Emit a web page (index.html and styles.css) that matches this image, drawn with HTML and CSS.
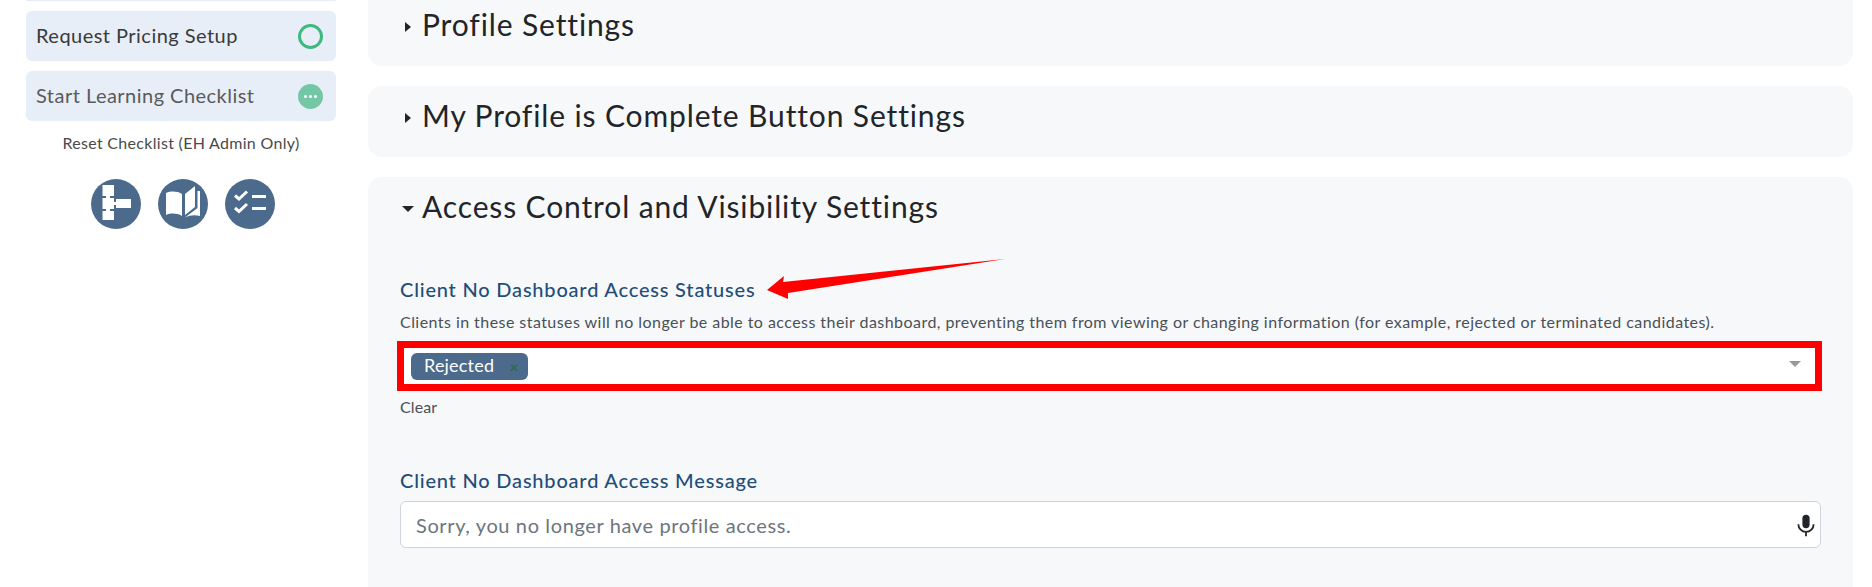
FILE: index.html
```html
<!DOCTYPE html>
<html lang="en">
<head>
<meta charset="utf-8">
<title>Access Control and Visibility Settings</title>
<link rel="stylesheet" href="styles.css">
</head>
<body>
<div class="page">
  <aside class="sidebar">
    <div class="task task-sliver"></div>
    <div class="task">
      <span class="task-name">Request Pricing Setup</span>
      <span class="ring"></span>
    </div>
    <div class="task task-muted">
      <span class="task-name">Start Learning Checklist</span>
      <span class="dots"><i></i><i></i><i></i></span>
    </div>
    <div class="reset">Reset Checklist (EH Admin Only)</div>
    <div class="tools">
      <svg class="tool" viewBox="0 0 50 50"><circle cx="25" cy="25" r="25" fill="#4b6a8c"/><path fill="#fff" d="M11.500 6H23v11h-4v2h4v4h2v-3h15v9H25v-3h-2v4H19v2h4v9H11.500v-9H15v-2h-3.500V19H15v-2h-3.500z"/></svg>
      <svg class="tool" viewBox="0 0 50 50"><circle cx="25" cy="25" r="25" fill="#4b6a8c"/><path fill="#fff" d="M8 14c5-2 11-2 16 1v22c-5-3-11-3-16-1zM27 15l10-8v21l-10 8zM39.500 12H42v25c-5-1.500-10-1-15 1.500L39.500 29z"/></svg>
      <svg class="tool" viewBox="0 0 50 50"><circle cx="25" cy="25" r="25" fill="#4b6a8c"/><path fill="none" stroke="#fff" stroke-width="3" d="M10 16.500l4 3.500 8-7.500M10 29l4 3.500 8-7.500M27 17.500h14M27 29.500h14"/></svg>
    </div>
  </aside>
  <main class="main">
    <section class="panel panel-clipped">
      <h2 class="panel-title"><span class="caret-right"></span>Profile Settings</h2>
    </section>
    <section class="panel">
      <h2 class="panel-title"><span class="caret-right"></span>My Profile is Complete Button Settings</h2>
    </section>
    <section class="panel panel-open">
      <h2 class="panel-title"><span class="caret-down"></span>Access Control and Visibility Settings</h2>
      <div class="label label-first">Client No Dashboard Access Statuses</div>
      <p class="desc">Clients in these statuses will no longer be able to access their dashboard, preventing them from viewing or changing information (for example, rejected or terminated candidates).</p>
      <div class="select">
        <span class="chip"><span class="chip-text">Rejected</span><span class="chip-x">×</span></span>
        <span class="select-arrow"></span>
        <span class="red-box"></span>
      </div>
      <div class="clear">Clear</div>
      <div class="label label-second">Client No Dashboard Access Message</div>
      <div class="input">
        <span class="placeholder">Sorry, you no longer have profile access.</span>
        <svg class="mic" viewBox="0 0 20 24"><rect x="6" y="0" width="8" height="15" rx="4" fill="#212529"/><path d="M1.500 10.500a8.500 8.500 0 0 0 17 0M10 19v5" fill="none" stroke="#212529" stroke-width="2"/></svg>
      </div>
      <svg class="red-arrow" viewBox="0 0 240 45"><polygon fill="#f00" points="0,31 17,17 16,23 238,0 21,34 21,40"/></svg>
    </section>
  </main>
</div>
</body>
</html>
```
FILE: styles.css
```css
* { box-sizing: border-box; }
html, body { margin: 0; height: 587px; overflow: hidden; background: #fff; }
body { font-family: "Lato", "Noto Sans", sans-serif; color: #333; }
.page { display: flex; height: 587px; overflow: hidden; }

.sidebar { width: 368px; flex: none; padding: 0 32px 0 26px; }
.task { display: flex; align-items: center; justify-content: space-between; height: 50px; margin-bottom: 10px; padding: 0 13px 0 10px; background: #e8eef8; border-radius: 6px; font-size: 20px; letter-spacing: .47px; color: #3a3a3a; }
.task-name { margin-top: -2px; }
.task-sliver { height: 1px; padding: 0; border-radius: 0 0 6px 6px; }
.task-muted { color: #5a5a5a; }
.ring { width: 25px; height: 25px; border: 3px solid #3cb97f; border-radius: 50%; }
.dots { display: flex; align-items: center; justify-content: center; gap: 2px; width: 25px; height: 25px; border-radius: 50%; background: #74c7a5; }
.dots i { width: 3px; height: 3px; border-radius: 50%; background: #fff; }
.reset { height: 24px; line-height: 24px; text-align: center; font-size: 16px; letter-spacing: .3px; color: #4a4a4a; }
.tools { display: flex; justify-content: center; gap: 17px; margin-top: 24px; padding-left: 3px; }
.tool { width: 50px; height: 50px; }

.main { width: 1485px; flex: none; }
.panel { background: #f7f8fa; border-radius: 14px; padding: 9px 32px 0; height: 71px; margin-bottom: 20px; }
.panel-clipped { height: 66px; padding-top: 4px; border-radius: 0 0 14px 14px; }
.panel-open { position: relative; height: 460px; margin-bottom: 0; border-radius: 14px 14px 0 0; }
.panel-title { margin: 0; display: flex; align-items: center; height: 40px; font-size: 30px; font-weight: 400; letter-spacing: .87px; color: #212529; }
.caret-right { width: 0; height: 0; margin: 6px 11px 0 5px; border-left: 6px solid #212529; border-top: 5.500px solid transparent; border-bottom: 5.500px solid transparent; }
.caret-down { width: 0; height: 0; margin: 6px 8px 0 2px; border-top: 6px solid #212529; border-left: 6px solid transparent; border-right: 6px solid transparent; }

.label { height: 24px; line-height: 24px; font-size: 20px; font-weight: 500; letter-spacing: .8px; color: #1f4e79; }
.label-first { margin-top: 51px; }
.label-second { margin-top: 51px; }
.desc { margin: 11px 0 0; height: 20px; line-height: 20px; font-size: 16px; white-space: nowrap; letter-spacing: .445px; color: #495057; }
.select { position: relative; display: flex; align-items: center; height: 36px; margin-top: 16px; padding-left: 11px; background: #fff; }
.chip { display: flex; align-items: center; height: 27px; width: 117px; padding: 0 0 0 13px; background: #4b6a8c; border-radius: 6px; color: #fff; font-size: 18px; letter-spacing: .2px; }
.chip-text { margin-top: -2px; }
.chip-x { margin-left: 15px; color: #2e6b4f; font-weight: 700; font-size: 16px; }
.select-arrow { position: absolute; right: 20px; top: 13px; border-top: 6px solid #999; border-left: 6px solid transparent; border-right: 6px solid transparent; }
.red-box { position: absolute; left: -3px; right: -1px; top: -7px; bottom: -7px; border: 7.500px solid #f00; }
.clear { margin-top: 13px; height: 20px; line-height: 20px; font-size: 16px; letter-spacing: .1px; color: #495057; }
.input { position: relative; display: flex; align-items: center; height: 47px; margin-top: 9px; padding-left: 15px; background: #fff; border: 1px solid #ced4da; border-radius: 6px; font-size: 20px; letter-spacing: .62px; color: #6c757d; }
.mic { position: absolute; right: 5px; top: 12px; width: 18px; height: 23px; }
.red-arrow { position: absolute; left: 399px; top: 82px; width: 240px; height: 45px; }
```
